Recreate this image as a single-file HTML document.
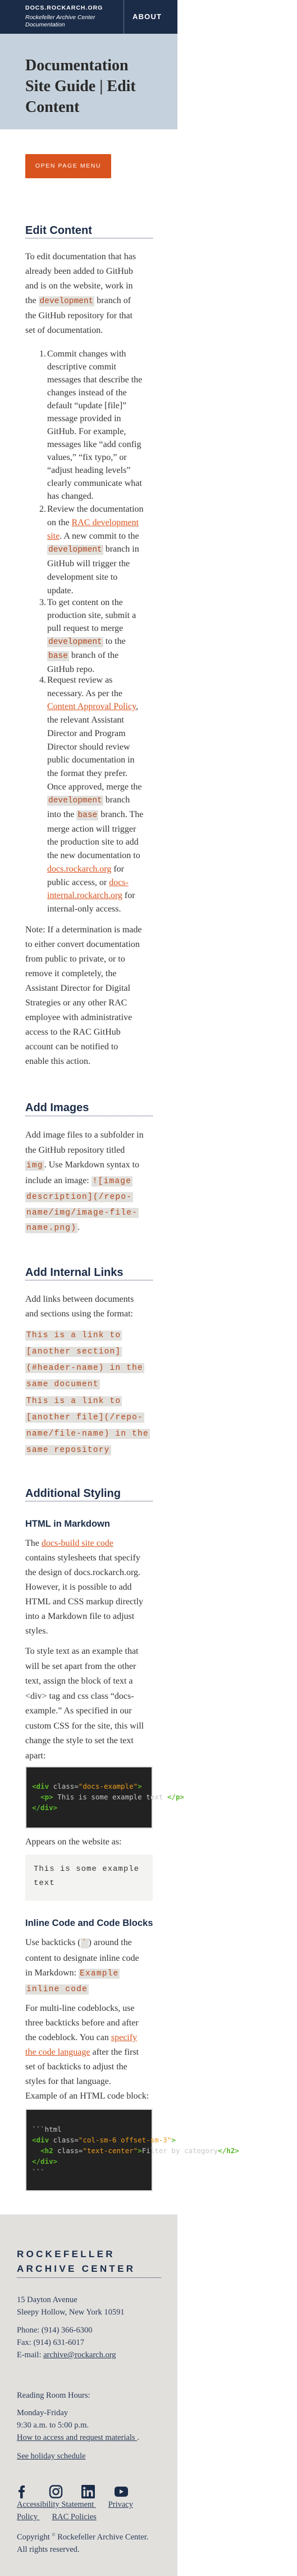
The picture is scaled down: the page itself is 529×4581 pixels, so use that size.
<!DOCTYPE html>
<html><head><meta charset="utf-8">
<style>
*{margin:0;padding:0;box-sizing:border-box}
body{width:529px;height:4581px;position:relative;background:#fff;font-family:"Liberation Serif",serif;color:#333;overflow:hidden}
.a{position:absolute;white-space:nowrap}
.t{left:45px;font-size:16px}
.li{left:70px;font-size:16px}
.li .n{position:absolute;left:0;top:0}
.li .x{position:absolute;left:14px;top:0}
code{font-family:"Liberation Mono",monospace;font-size:14.5px;color:#b0461a;background:#e1e0dd;padding:1px 2px}
a{color:#d9531e;text-decoration:underline}
.h2{left:45px;width:227px;font-family:"Liberation Sans",sans-serif;font-weight:bold;font-size:20px;color:#1b2c48;line-height:24px;border-bottom:1px dotted #1b2c48}
.h3{left:45px;font-family:"Liberation Sans",sans-serif;font-weight:bold;font-size:16.5px;color:#1b2c48;line-height:20px}
.cb{position:absolute;left:45px;width:227px;border:2px solid #e1e0dd;background:#222}
.cl{position:absolute;left:57px;font-family:"DejaVu Sans Mono","Liberation Mono",monospace;font-size:12.5px;line-height:19px;white-space:pre;color:#ccc}
.g{color:#5cb82a;font-weight:bold}.o{color:#e99a1c}.w{color:#c8c8c8}
.f{left:30px;font-size:14.5px;color:#2b3a55}
.f a{color:#2b3a55}
.ml code{letter-spacing:1.2px}
</style></head><body>
<div class="a" style="left:0;top:0;width:316px;height:60px;background:#1b2c48"></div>
<div class="a" style="left:220px;top:0;width:1px;height:60px;background:#6b7890"></div>
<div class="a" style="left:45px;top:8px;font-family:'Liberation Sans',sans-serif;font-weight:bold;font-size:10.5px;letter-spacing:1px;color:#fff">DOCS.ROCKARCH.ORG</div>
<div class="a" style="left:45px;top:25px;font-family:'Liberation Sans',sans-serif;font-style:italic;font-size:10.5px;line-height:13px;color:#fff">Rockefeller Archive Center<br>Documentation</div>
<div class="a" style="left:236px;top:22px;font-family:'Liberation Sans',sans-serif;font-weight:bold;font-size:13px;letter-spacing:1.2px;color:#fff">ABOUT</div>
<div class="a" style="left:0;top:60px;width:316px;height:170px;background:#c5d1dc"></div>
<div class="a" style="left:45px;top:98px;font-family:'Liberation Serif',serif;font-weight:bold;font-size:28px;line-height:37px;color:#2a2a2a">Documentation<br>Site Guide | Edit<br>Content</div>
<div class="a" style="left:45px;top:274px;width:153px;height:43px;background:#d9531e;border-radius:2px;color:#fff;font-family:'Liberation Sans',sans-serif;font-size:10.5px;letter-spacing:1.6px;text-align:center;line-height:43px">OPEN PAGE MENU</div>

<div class="a h2" style="top:398px;height:26px">Edit Content</div>
<div class="a t" style="top:444px;line-height:26px">To edit documentation that has<br>already been added to GitHub<br>and is on the website, work in<br>the <code>development</code> branch of<br>the GitHub repository for that<br>set of documentation.</div>

<div class="a li" style="top:618px;line-height:23px"><span class="n">1.</span><span class="x">Commit changes with<br>descriptive commit<br>messages that describe the<br>changes instead of the<br>default “update [file]”<br>message provided in<br>GitHub. For example,<br>messages like “add config<br>values,” “fix typo,” or<br>“adjust heading levels”<br>clearly communicate what<br>has changed.</span></div>
<div class="a li" style="top:894px;line-height:23.8px"><span class="n">2.</span><span class="x">Review the documentation<br>on the <a>RAC development</a><br><a>site</a>. A new commit to the<br><code>development</code> branch in<br>GitHub will trigger the<br>development site to<br>update.</span></div>
<div class="a li" style="top:1060px;line-height:23px"><span class="n">3.</span><span class="x">To get content on the<br>production site, submit a<br>pull request to merge<br><code>development</code> to the<br><code>base</code> branch of the<br>GitHub repo.</span></div>
<div class="a li" style="top:1198px;line-height:23.7px"><span class="n">4.</span><span class="x">Request review as<br>necessary. As per the<br><a>Content Approval Policy</a>,<br>the relevant Assistant<br>Director and Program<br>Director should review<br>public documentation in<br>the format they prefer.<br>Once approved, merge the<br><code>development</code> branch<br>into the <code>base</code> branch. The<br>merge action will trigger<br>the production site to add<br>the new documentation to<br><a>docs.rockarch.org</a> for<br>public access, or <a>docs-</a><br><a>internal.rockarch.org</a> for<br>internal-only access.</span></div>

<div class="a t" style="top:1641px;line-height:26px">Note: If a determination is made<br>to either convert documentation<br>from public to private, or to<br>remove it completely, the<br>Assistant Director for Digital<br>Strategies or any other RAC<br>employee with administrative<br>access to the RAC GitHub<br>account can be notified to<br>enable this action.</div>

<div class="a h2" style="top:1958px;height:27px">Add Images</div>
<div class="a t ml" style="top:2006px;line-height:26.7px">Add image files to a subfolder in<br>the GitHub repository titled<br><code>img</code>. Use Markdown syntax to<br>include an image: <code>![image</code><br><code>description](/repo-</code><br><code>name/img/image-file-</code><br><code>name.png)</code>.</div>

<div class="a h2" style="top:2251px;height:26px">Add Internal Links</div>
<div class="a t" style="top:2298px;line-height:26px">Add links between documents<br>and sections using the format:</div>
<div class="a t ml" style="top:2360px;line-height:27px"><code>This is a link to</code><br><code>[another section]</code><br><code>(#header-name) in the</code><br><code>same document</code></div>
<div class="a t ml" style="top:2477px;line-height:27px"><code>This is a link to</code><br><code>[another file](/repo-</code><br><code>name/file-name) in the</code><br><code>same repository</code></div>

<div class="a h2" style="top:2644px;height:26px">Additional Styling</div>
<div class="a h3" style="top:2700px">HTML in Markdown</div>
<div class="a t" style="top:2732px;line-height:26px">The <a>docs-build site code</a><br>contains stylesheets that specify<br>the design of docs.rockarch.org.<br>However, it is possible to add<br>HTML and CSS markup directly<br>into a Markdown file to adjust<br>styles.</div>
<div class="a t" style="top:2924px;line-height:26.5px">To style text as an example that<br>will be set apart from the other<br>text, assign the block of text a<br>&lt;div&gt; tag and css class “docs-<br>example.” As specified in our<br>custom CSS for the site, this will<br>change the style to set the text<br>apart:</div>

<div class="cb" style="top:3141px;height:111px"></div>
<div class="cl" style="top:3167px"><span class="g">&lt;div</span> <span class="w">class=</span><span class="o">"docs-example"</span><span class="g">&gt;</span>
  <span class="g">&lt;p&gt;</span> <span class="w">This is some example text </span><span class="g">&lt;/p&gt;</span>
<span class="g">&lt;/div&gt;</span></div>

<div class="a t" style="top:3263px;line-height:26px">Appears on the website as:</div>
<div class="a" style="left:45px;top:3298px;width:227px;height:82px;background:#f3f3f2"></div>
<div class="a" style="left:60px;top:3312px;font-family:'Liberation Mono',monospace;font-size:14px;letter-spacing:1px;line-height:25px;color:#333">This is some example<br>text</div>

<div class="a h3" style="top:3410px">Inline Code and Code Blocks</div>
<div class="a t ml" style="top:3442px;line-height:26.7px">Use backticks (<code>&#96;</code>) around the<br>content to designate inline code<br>in Markdown: <code>Example</code><br><code>inline code</code></div>
<div class="a t" style="top:3559px;line-height:26px">For multi-line codeblocks, use<br>three backticks before and after<br>the codeblock. You can <a>specify</a><br><a>the code language</a> after the first<br>set of backticks to adjust the<br>styles for that language.<br>Example of an HTML code block:</div>

<div class="cb" style="top:3750px;height:147px"></div>
<div class="cl" style="top:3777px"><span class="w">&#96;&#96;&#96;html</span>
<span class="g">&lt;div</span> <span class="w">class=</span><span class="o">"col-sm-6 offset-sm-3"</span><span class="g">&gt;</span>
  <span class="g">&lt;h2</span> <span class="w">class=</span><span class="o">"text-center"</span><span class="g">&gt;</span><span class="w">Filter by category</span><span class="g">&lt;/h2&gt;</span>
<span class="g">&lt;/div&gt;</span>
<span class="w">&#96;&#96;&#96;</span></div>

<div class="a" style="left:0;top:3938px;width:316px;height:643px;background:#e1e0dd"></div>
<div class="a" style="left:30px;top:3996px;width:257px;height:55px;font-family:'Liberation Sans',sans-serif;font-weight:bold;font-size:17px;letter-spacing:4.3px;line-height:26px;color:#1b2c48;border-bottom:1px dotted #1b2c48">ROCKEFELLER<br>ARCHIVE CENTER</div>
<div class="a f" style="top:4079px;line-height:22px">15 Dayton Avenue<br>Sleepy Hollow, New York 10591</div>
<div class="a f" style="top:4133px;line-height:22px">Phone: (914) 366-6300<br>Fax: (914) 631-6017<br>E-mail: <a>archive@rockarch.org</a></div>
<div class="a f" style="top:4249px;line-height:22px">Reading Room Hours:</div>
<div class="a f" style="top:4280px;line-height:22px">Monday-Friday<br>9:30 a.m. to 5:00 p.m.<br><a>How to access and request materials </a>.</div>
<div class="a f" style="top:4357px;line-height:22px"><a>See holiday schedule</a></div>
<svg class="a" style="left:30px;top:4419px" width="200" height="25" viewBox="0 0 200 25">
<path d="M6 24V13H3V9h3V6c0-3 2-5 5-5h3v4h-2c-1 0-1.5.5-1.5 1.5V9H14l-.5 4H10.5v11z" fill="#1b2c48"/>
<rect x="59" y="1.5" width="21" height="21" rx="6" fill="none" stroke="#1b2c48" stroke-width="2.4"/>
<circle cx="69.5" cy="12" r="5" fill="none" stroke="#1b2c48" stroke-width="2.4"/>
<circle cx="75.5" cy="6" r="1.3" fill="#1b2c48"/>
<rect x="115" y="0" width="24" height="24" rx="2" fill="#1b2c48"/>
<rect x="118.5" y="9.5" width="3.5" height="11" fill="#e1e0dd"/>
<circle cx="120.2" cy="5.7" r="2" fill="#e1e0dd"/>
<path d="M124.5 9.5h3.3v1.6c.8-1.2 2-1.9 3.8-1.9 3 0 4 2 4 5v6.3h-3.5v-5.6c0-1.5-.4-2.6-1.9-2.6s-2.2 1.1-2.2 2.6v5.6h-3.5z" fill="#e1e0dd"/>
<rect x="174" y="3" width="24" height="18" rx="5" fill="#1b2c48"/>
<path d="M183 8v8l7-4z" fill="#e1e0dd"/>
</svg>
<div class="a f" style="top:4443px;line-height:22px"><a>Accessibility Statement </a>&nbsp;&nbsp;&nbsp;&nbsp;&nbsp;&nbsp;<a>Privacy</a><br><a>Policy </a>&nbsp;&nbsp;&nbsp;&nbsp;&nbsp;&nbsp;<a>RAC Policies</a></div>
<div class="a f" style="top:4497px;line-height:22px">Copyright <sup style="font-size:8px">©</sup> Rockefeller Archive Center.<br>All rights reserved.</div>
</body></html>
